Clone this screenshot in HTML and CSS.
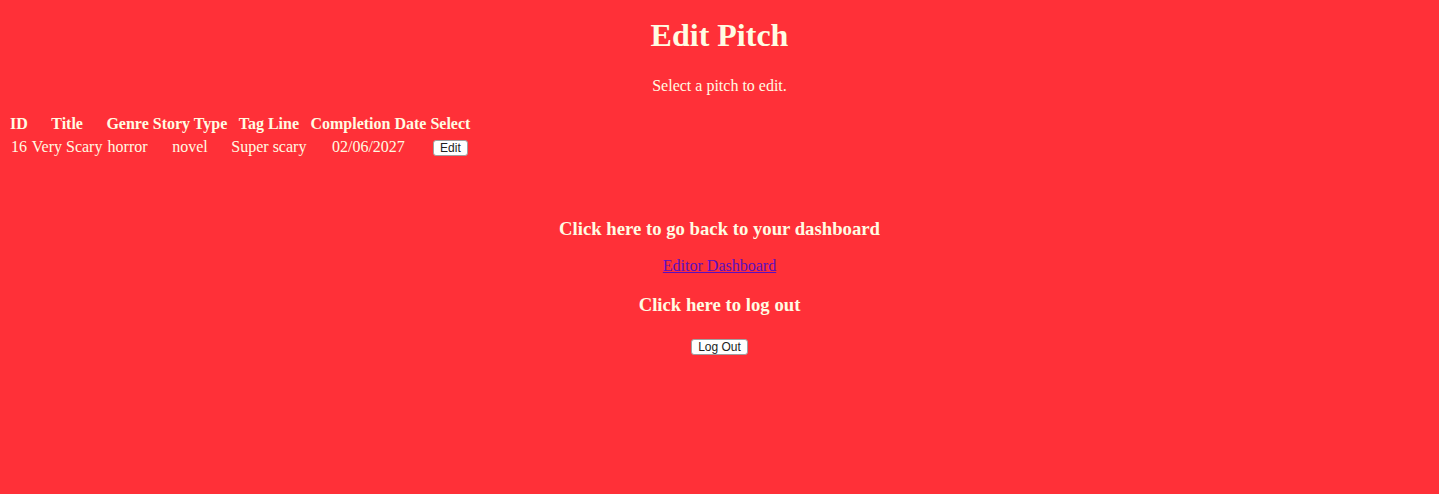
FILE: index.html
```html
<!DOCTYPE html>
<html>
<head>
<meta charset="utf-8">
<link rel="stylesheet" href="styles.css">
</head>
<body class="page">
<h1 class="title">Edit Pitch</h1>
<p class="intro">Select a pitch to edit.</p>
<table class="pitches">
<thead>
<tr><th>ID</th><th>Title</th><th>Genre</th><th>Story Type</th><th>Tag Line</th><th>Completion Date</th><th>Select</th></tr>
</thead>
<tbody>
<tr><td>16</td><td>Very Scary</td><td>horror</td><td>novel</td><td>Super scary</td><td>02/06/2027</td><td><button class="btn">Edit</button></td></tr>
</tbody>
</table>
<div class="links">
<h3 class="sub">Click here to go back to your dashboard</h3>
<a class="dash" href="#">Editor Dashboard</a>
<h3 class="sub">Click here to log out</h3>
<button class="btn">Log Out</button>
</div>
</body>
</html>
```
FILE: styles.css
```css
html, body { height: 100%; }
.page {
  margin: 0;
  padding: 1px 7px 8px;
  background: #ff3038;
  color: #fffbe2;
  font-family: "Liberation Serif", "Times New Roman", serif;
  font-size: 16px;
  box-sizing: border-box;
}
.title {
  text-align: center;
  font-size: 32px;
  margin: 16px 0 0;
}
.intro {
  text-align: center;
  margin: 23px 0 0;
}
.pitches {
  margin-top: 17px;
  border-spacing: 2px;
}
.pitches th, .pitches td {
  padding: 1px;
  text-align: center;
}
.pitches td { padding: 2px 1px 2px; }
.pitches th { font-weight: bold; }
.btn {
  font-family: "Liberation Sans", Arial, sans-serif;
  font-size: 12px;
  color: #222;
  background: #fff;
  border: 1px solid #a0a0a0;
  border-radius: 3px;
  padding: 1px 6px;
  line-height: 12px;
}
.links {
  display: flex;
  flex-direction: column;
  align-items: center;
  margin-top: 58px;
}
.sub {
  font-size: 18.72px;
  margin: 0;
}
.dash {
  color: #5b0fbf;
  margin-top: 17px;
}
.links .sub + .btn { margin-top: 23px; }
.dash + .sub { margin-top: 19px; }
```
